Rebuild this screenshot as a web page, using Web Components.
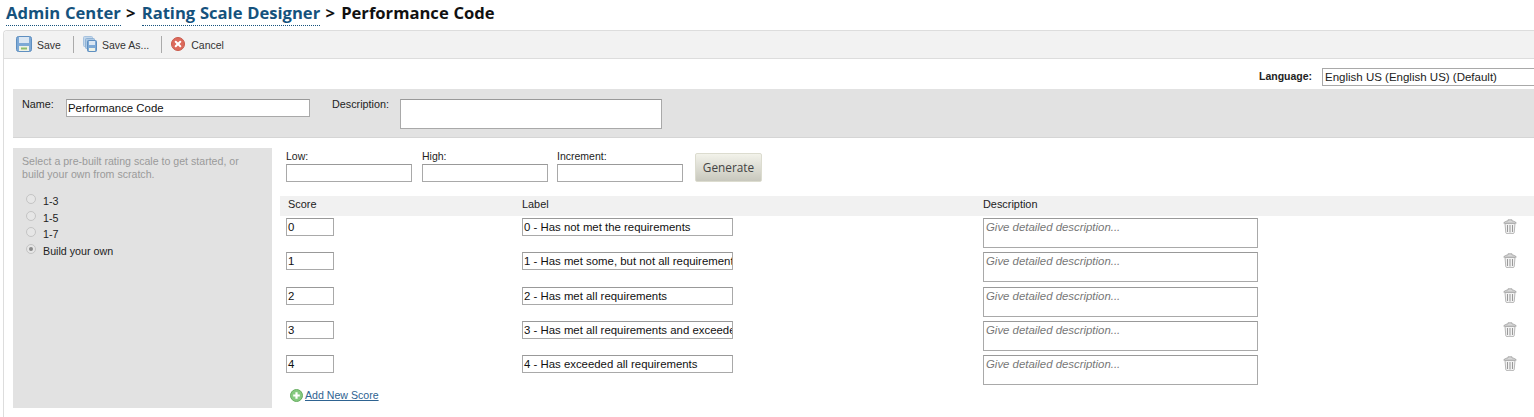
<!DOCTYPE html>
<html><head><meta charset="utf-8"><style>
html,body{margin:0;padding:0;background:#fff;overflow:hidden;height:417px}
body{font:10.5px "Liberation Sans",Arial,sans-serif;color:#222}
</style></head><body>
<x-app></x-app>
<script>
const def=(name,html)=>{customElements.define(name,class extends HTMLElement{
  connectedCallback(){if(this.shadowRoot)return;const s=this.attachShadow({mode:'open'});s.innerHTML=typeof html==='function'?html(this):html;}
})};
const floppy=`<svg width="16" height="16" viewBox="0 0 16 16"><rect x=".5" y=".5" width="15" height="15" rx="2" fill="#7da9d6" stroke="#5f8fc0"/><rect x="3" y="1" width="10" height="6" fill="#dbe7f3"/><rect x="3" y="10" width="10" height="5" fill="#eef2e6"/><rect x="5" y="11.500" width="6" height="2" fill="#8dbd6e"/></svg>`;
const floppies=`<svg width="14" height="16" viewBox="0 0 14 16"><rect x=".5" y=".5" width="9" height="10" rx="1" fill="#c4d8ec" stroke="#a6c2de"/><rect x="2.500" y="2.500" width="9" height="10" rx="1" fill="#aecae6" stroke="#8fb2d5"/><rect x="4.500" y="4.500" width="9" height="11" rx="1" fill="#7da9d6" stroke="#5f8fc0"/><rect x="6" y="5" width="6" height="4" fill="#dbe7f3"/><rect x="6" y="12" width="6" height="3" fill="#eef2e6"/></svg>`;
const cancel=`<svg width="14" height="14" viewBox="0 0 14 14"><circle cx="7" cy="7" r="6.500" fill="#dc6a5c" stroke="#c9594b"/><path d="M4.700 4.700l4.600 4.600M9.300 4.700l-4.600 4.600" stroke="#fff" stroke-width="2" stroke-linecap="round"/></svg>`;
const trash=`<svg width="14" height="15" viewBox="0 0 14 15"><path d="M.8 4.200C.8 2.600 4 2 5 1.900V.8h4v1.100c1 .1 4.200.7 4.200 2.300z" fill="#d8d8d8" stroke="#a0a0a0" stroke-width=".8"/><path d="M2 4.500h10l-.8 9.200c0 .7-1 1-4.200 1s-4.200-.3-4.200-1z" fill="#f2f2f2" stroke="#a6a6a6" stroke-width=".8"/><path d="M4.500 6v7M7 6v7.500M9.500 6v7" stroke="#999" stroke-width="1"/></svg>`;
const plus=`<svg width="13" height="13" viewBox="0 0 13 13"><circle cx="6.500" cy="6.500" r="6" fill="#85c97f" stroke="#67ad60"/><path d="M6.500 3.200v6.600M3.200 6.500h6.600" stroke="#fff" stroke-width="2.200"/></svg>`;

def('x-crumbs',`<style>:host{display:block;height:30px;box-sizing:border-box;padding:3px 0 0 6px;font:bold 16.600px/19px "Open Sans","DejaVu Sans",sans-serif;color:#111;white-space:nowrap;word-spacing:.4px}
a{color:#15527d;text-decoration:none;border-bottom:1px dotted #15527d;padding-bottom:1px}
s{text-decoration:none;margin:0 1.500px 0 .5px}</style>
<a>Admin Center</a> <s>&gt;</s> <a>Rating Scale Designer</a> <s>&gt;</s> Performance Code`);

def('x-tool',h=>`<style>:host{display:inline-flex;align-items:center;gap:${h.getAttribute('g')||5}px;padding:0 ${h.getAttribute('p')||11}px 0 0;height:17px;color:#333}
:host([sep]){border-right:1px solid #aaa;margin-right:9px}</style><slot name="i"></slot><slot></slot>`);

def('x-toolbar',`<style>:host{display:flex;align-items:center;height:27px;padding-left:12px;background:#f2f2f2;border-bottom:1px solid #ddd;border-radius:4px 0 0 0;font-size:10.500px}</style><slot></slot>`);

def('x-box',h=>`<style>:host{display:block;box-sizing:border-box;background:#fff;border:1px solid #a9a9a9;border-top-color:#999;height:${h.getAttribute('h')||18}px;width:${h.getAttribute('w')}px;padding:0 0 0 1px;overflow:hidden;white-space:nowrap;font-size:11.400px;line-height:16px;color:#111}
:host([ph]){font-style:italic;color:#777;padding-left:2px}</style><slot></slot>`);

def('x-rating-panel',`<style>:host{display:block;width:259px;height:260px;background:#e2e2e2;box-sizing:border-box;padding:7px 14px 7px 9px;color:#9a9a9a;line-height:12.500px;flex:none;font-size:10.600px}
p{margin:0 0 13px}</style><p>Select a pre-built rating scale to get started, or build your own from scratch.</p><slot></slot>`);

def('x-radio',`<style>:host{display:flex;align-items:center;height:16.700px;gap:7px;color:#222;padding-left:4px;font-size:10.700px}
i{width:10px;height:10px;border-radius:50%;border:1px solid #c4c4c4;background:#e6e6e6;display:block;position:relative;margin-top:-5px;box-sizing:border-box;flex:none}
:host([on]) i::after{content:"";position:absolute;left:2px;top:2px;width:4px;height:4px;border-radius:50%;background:#8a8a8a}</style><i></i><span><slot></slot></span>`);

def('x-labeled',h=>`<style>:host{display:block;width:${h.getAttribute('w')}px;margin-right:${h.getAttribute('mr')||0}px}
label{display:block;height:13px;line-height:11px;color:#222}</style><label>${h.getAttribute('label')}</label><x-box w="${h.getAttribute('w')}"></x-box>`);

def('x-score-row',h=>`<style>:host{display:grid;grid-template-columns:236px 461px 520px 1fr;height:34.250px;padding-left:6px;box-sizing:border-box;align-items:start}
.t{margin-top:1px}</style>
<x-box w="48">${h.getAttribute('score')}</x-box>
<x-box w="211">${h.getAttribute('label')}</x-box>
<x-box w="275" h="30" ph>Give detailed description...</x-box>
<span class="t">${trash}</span>`);

def('x-header-row',`<style>:host{display:grid;grid-template-columns:236px 461px 1fr;height:20px;line-height:16px;background:#f1f1f1;padding-left:8px;color:#222;margin-bottom:2px;font-size:10.900px}</style>
<span>Score</span><span style="margin-left:-2px">Label</span><span style="margin-left:-2px">Description</span>`);

def('x-app',`<style>:host{display:block;width:1534px;height:417px;overflow:hidden}
.card{margin-left:3px;border:1px solid #ddd;border-width:1px 0 0 1px;border-radius:4px 0 0 0;height:400px;width:1531px;box-sizing:border-box;position:relative}
.lang{display:flex;height:30px;box-sizing:border-box;padding:10px 0 0 1255px;align-items:flex-start;font-weight:bold}
.lang b{line-height:14px;width:63px;flex:none}
.sel{width:230px;height:18px;box-sizing:border-box;border:1px solid #a9a9a9;background:#fff;padding-left:2px;font-weight:normal;font-size:11.500px;line-height:16px;color:#222;white-space:nowrap;flex:none;margin-top:-1px}
.name{margin-left:9px;height:49px;background:#e2e2e2;border-bottom:1px solid #d5d5d5;display:flex;box-sizing:border-box;padding:10px 0 0 9px}
.name span{line-height:10px;color:#222;font-size:10.800px}
.main{display:flex;margin:10px 0 0 9px}
.right{margin-left:8px;flex:1;min-width:0}
.gen{display:flex;align-items:flex-start;height:48px;padding:3px 0 0 6px;box-sizing:border-box}
.btn{width:67px;height:29px;box-sizing:border-box;margin-left:12px;border:1px solid #dcdccf;border-radius:2px;background:linear-gradient(#f2f2ea,#c8c8bd);color:#444;font:11.800px/27px "Open Sans","Liberation Sans",sans-serif;text-align:center;flex:none;margin-top:2px}
.add{display:flex;align-items:center;gap:2px;margin:-1px 0 0 10px;color:#2e6391;text-decoration:underline;height:14px;font-size:10.600px}
</style>
<x-crumbs></x-crumbs>
<div class="card">
<x-toolbar>
 <x-tool sep p="12"><span slot="i">${floppy}</span>Save</x-tool>
 <x-tool sep g="5" p="12"><span slot="i">${floppies}</span>Save As...</x-tool>
 <x-tool g="6"><span slot="i">${cancel}</span>Cancel</x-tool>
</x-toolbar>
<div class="lang"><b>Language:</b><div class="sel">English US (English US) (Default)</div></div>
<div class="name"><span style="width:44px">Name:</span><x-box w="244" style="margin-right:22px">Performance Code</x-box><span style="width:68px">Description:</span><x-box w="262" h="30"></x-box></div>
<div class="main">
<x-rating-panel><x-radio>1-3</x-radio><x-radio>1-5</x-radio><x-radio>1-7</x-radio><x-radio on>Build your own</x-radio></x-rating-panel>
<div class="right">
 <div class="gen"><x-labeled w="126" mr="10" label="Low:"></x-labeled><x-labeled w="126" mr="9" label="High:"></x-labeled><x-labeled w="126" label="Increment:"></x-labeled><div class="btn">Generate</div></div>
 <x-header-row></x-header-row>
 <x-score-row score="0" label="0 - Has not met the requirements"></x-score-row>
 <x-score-row score="1" label="1 - Has met some, but not all requirements"></x-score-row>
 <x-score-row score="2" label="2 - Has met all requirements"></x-score-row>
 <x-score-row score="3" label="3 - Has met all requirements and exceeded some"></x-score-row>
 <x-score-row score="4" label="4 - Has exceeded all requirements"></x-score-row>
 <div class="add">${plus}<span>Add New Score</span></div>
</div>
</div>
</div>`);
</script>
</body></html>
